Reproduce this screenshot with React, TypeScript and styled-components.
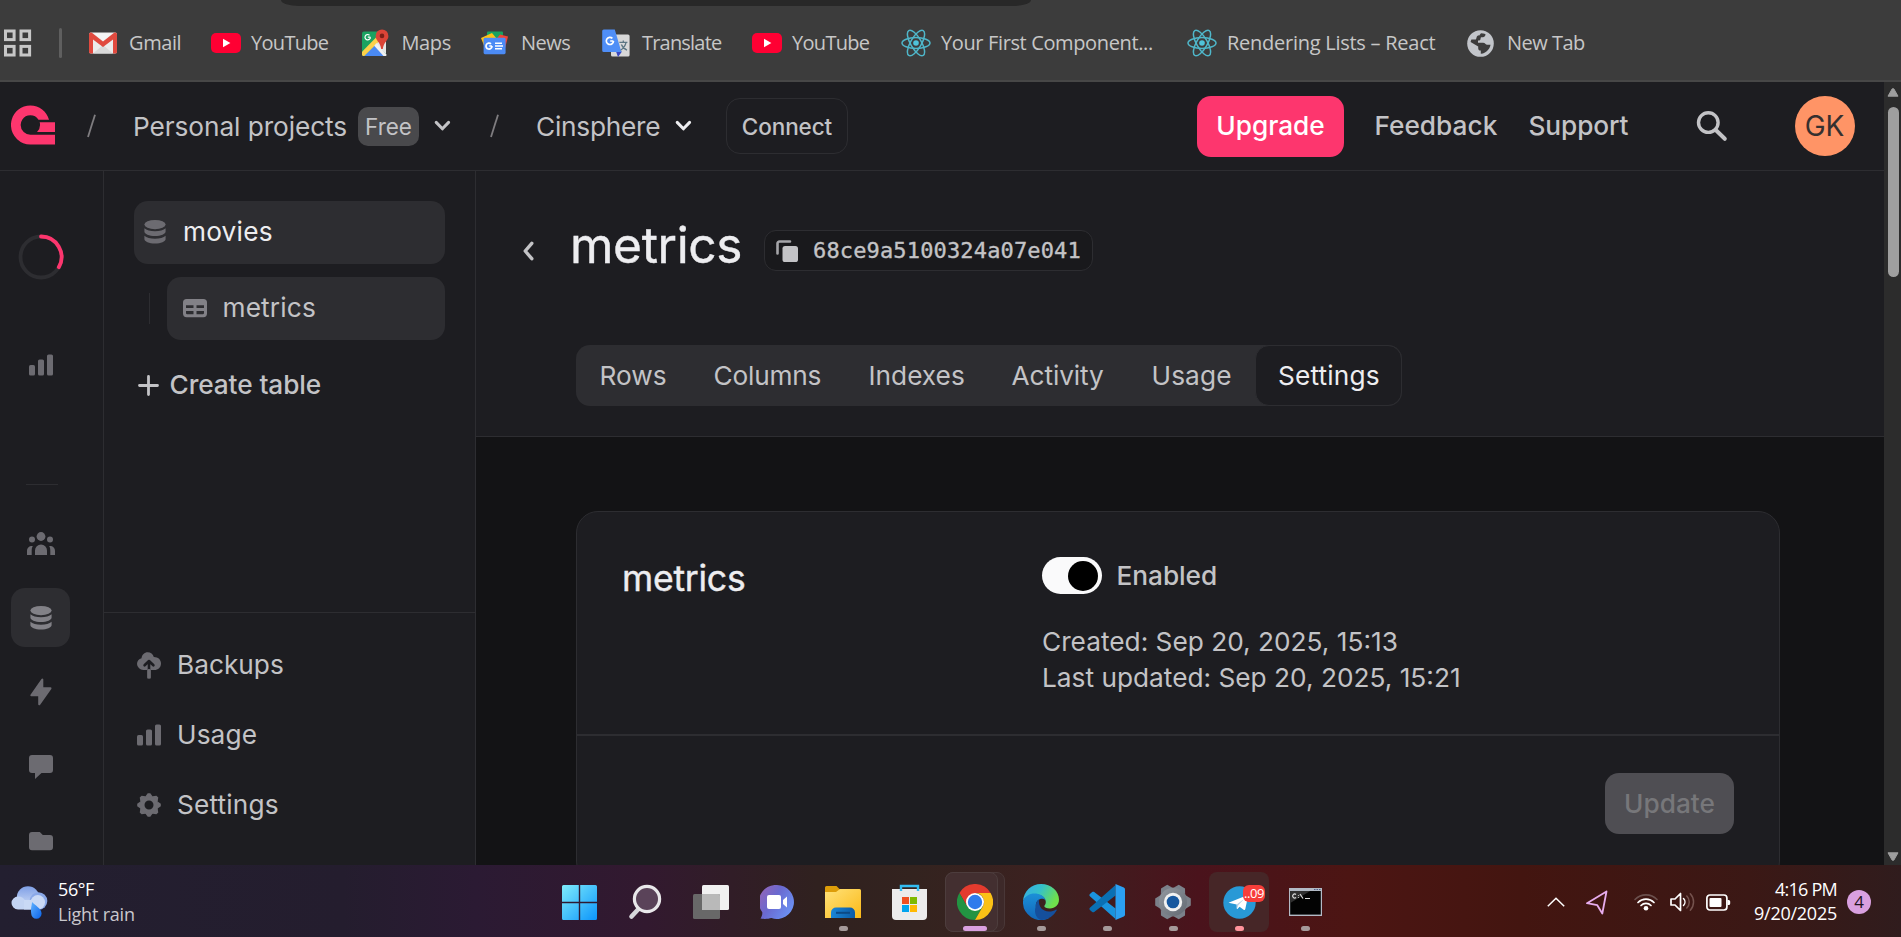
import React from 'react';
import styled, { createGlobalStyle, css } from 'styled-components';
import { SiAppwrite } from 'react-icons/si';

const ui = '"Open Sans", "Noto Sans", sans-serif';
const inter = 'Inter, "Liberation Sans", sans-serif';
const line = '#2d2d31';
const panel = '#1d1d21';

const Global = createGlobalStyle`
  * { box-sizing: border-box; }
  html, body { margin: 0; background: #131315; overflow: hidden; }
  svg { display: block; flex: none; }
`;

const Screen = styled.div`
  width: 1901px;
  height: 937px;
  display: flex;
  flex-direction: column;
  overflow: hidden;
  font-family: ${inter};
`;

/* ---------- browser chrome ---------- */
const BrowserBar = styled.div`
  height: 82px;
  flex: none;
  background: #3c3c3c;
  border-bottom: 2px solid #474747;
`;
const AddressEdge = styled.div`
  width: 750px;
  height: 6px;
  margin-left: 281px;
  background: #282828;
  border-radius: 0 0 18px 18px / 0 0 6px 6px;
`;
const Bookmarks = styled.div`
  height: 74px;
  display: flex;
  align-items: center;
  padding-left: 4px;
`;
const BookmarkDivider = styled.div`
  width: 3px;
  height: 30px;
  border-radius: 2px;
  background: #5f5f5f;
  margin: 0 27px 0 27px;
`;
const Bookmark = styled.div<{ $w: number }>`
  width: ${(p) => p.$w}px;
  display: flex;
  align-items: center;
  white-space: nowrap;
`;
const BookmarkIcon = styled.div`
  width: 40px;
  flex: none;
`;
const BookmarkText = styled.span<{ $ls: number }>`
  font: 400 20px/26px ${ui};
  color: #c7c7c7;
  letter-spacing: ${(p) => p.$ls}px;
`;

/* ---------- page shell ---------- */
const Page = styled.div`
  height: 783px;
  flex: none;
  display: flex;
  overflow: hidden;
  background: #131315;
`;
const Site = styled.div`
  width: 1884px;
  display: flex;
  flex-direction: column;
`;
const Scrollbar = styled.div`
  width: 17px;
  background: #2c2c2c;
  display: flex;
  flex-direction: column;
  align-items: center;
  padding: 6px 0 4px 0;
`;
const Thumb = styled.div`
  width: 11px;
  height: 170px;
  border-radius: 6px;
  background: #9f9f9f;
  margin: 10px 0 auto 1px;
`;
const Header = styled.header`
  height: 89px;
  flex: none;
  background: ${panel};
  border-bottom: 1px solid ${line};
  display: flex;
  align-items: center;
  padding-left: 11px;
  color: #c3c3c6;
`;
const Logo = styled.span`
  padding-bottom: 2px;
`;
const Label = styled.span<{ $w: number; $ml?: number; $size?: number; $weight?: number; $ls?: number; $color?: string; $drop?: number }>`
  width: ${(p) => p.$w}px;
  margin-left: ${(p) => p.$ml ?? 0}px;
  padding-top: ${(p) => p.$drop ?? 0}px;
  flex: none;
  white-space: nowrap;
  font-size: ${(p) => p.$size ?? 26.25}px;
  font-weight: ${(p) => p.$weight ?? 400};
  letter-spacing: ${(p) => p.$ls ?? 0}px;
  color: ${(p) => p.$color ?? '#c3c3c6'};
  line-height: 36px;
`;
const Badge = styled.span`
  width: 61px;
  height: 39px;
  margin: 0 15px 0 11px;
  display: flex;
  align-items: center;
  justify-content: center;
  border-radius: 10px;
  background: #49494c;
  font-size: 22.5px;
`;
const Spot = styled.span<{ $ml: number }>`
  margin-left: ${(p) => p.$ml}px;
`;
const Button = styled.button<{ $kind: 'outline' | 'pink' | 'disabled'; $w: number }>`
  width: ${(p) => p.$w}px;
  height: 61px;
  padding: 0;
  border: 0;
  border-radius: 14px;
  flex: none;
  font: 500 26.25px/36px ${inter};
  ${(p) => p.$kind === 'pink' && css`background: #fd366e; color: #fff;`}
  ${(p) => p.$kind === 'disabled' && css`background: #4f4e53; color: #77777a;`}
  ${(p) => p.$kind === 'outline' && css`
    height: 56px;
    padding-top: 2px;
    background: transparent;
    border: 1px solid ${line};
    color: #c3c3c6;
    font-size: 22.5px;
    letter-spacing: -0.1px;
  `}
`;
const Avatar = styled.div`
  width: 60px;
  height: 60px;
  margin-left: 67px;
  border-radius: 50%;
  background: #ff9466;
  color: #36302f;
  font-size: 28px;
  display: flex;
  align-items: center;
  justify-content: center;
`;
const Body = styled.div`
  flex: 1;
  display: flex;
  min-height: 0;
`;

/* ---------- left rail ---------- */
const Rail = styled.nav`
  width: 104px;
  flex: none;
  background: ${panel};
  border-right: 1px solid ${line};
  padding: 56px 0 0 11px;
  display: flex;
  flex-direction: column;
  overflow: hidden;
`;
const RailTile = styled.div<{ $mt?: number; $active?: boolean }>`
  width: 59px;
  height: 59px;
  flex: none;
  margin-top: ${(p) => p.$mt ?? 15.4}px;
  border-radius: 14px;
  background: ${(p) => (p.$active ? line : 'transparent')};
  color: ${(p) => (p.$active ? '#828187' : '#6c6b71')};
  display: flex;
  align-items: center;
  justify-content: center;
`;
const RailDivider = styled.div`
  width: 32px;
  height: 1px;
  flex: none;
  margin: 90px 0 0 15px;
  background: ${line};
`;

/* ---------- database side panel ---------- */
const Side = styled.aside`
  width: 372px;
  flex: none;
  background: ${panel};
  border-right: 1px solid ${line};
  display: flex;
  flex-direction: column;
`;
const SideTop = styled.div`
  height: 441px;
  padding: 30px 30px 0;
`;
const SideBottom = styled.div`
  flex: 1;
  border-top: 1px solid ${line};
  padding: 17px 0 0 33px;
`;
const TreeRow = styled.div`
  display: flex;
  align-items: center;
  justify-content: space-between;
  margin-top: 13px;
`;
const TreeLine = styled.div`
  width: 1px;
  height: 31px;
  margin-left: 15px;
  background: ${line};
`;
const TreeItem = styled.div<{ $w: number; $pad: number; $gap: number; $icon: string }>`
  width: ${(p) => p.$w}px;
  height: 63px;
  padding: 0 0 1px ${(p) => p.$pad}px;
  border-radius: 14px;
  background: ${line};
  display: flex;
  align-items: center;
  gap: ${(p) => p.$gap}px;
  color: ${(p) => p.$icon};
`;
const CreateTable = styled.div`
  display: flex;
  align-items: center;
  gap: 10.5px;
  padding: 27px 0 0 4px;
  color: #c3c3c6;
`;
const SideLink = styled.div`
  height: 70px;
  display: flex;
  align-items: center;
  gap: 16px;
  color: #6c6b71;
`;

/* ---------- main content ---------- */
const Main = styled.main`
  flex: 1;
  min-width: 0;
`;
const Cover = styled.div`
  height: 266px;
  background: ${panel};
  border-bottom: 1px solid ${line};
  padding-top: 50px;
`;
const TitleRow = styled.div`
  height: 59px;
  display: flex;
  align-items: center;
  padding-left: 46px;
  color: #c3c3c6;
`;
const Title = styled.h1`
  width: 194px;
  margin: 0 0 11px 35px;
  font-size: 49.6px;
  line-height: 60px;
  font-weight: 400;
  letter-spacing: -0.35px;
  color: #ededf0;
  -webkit-text-stroke: 0.4px #ededf0;
`;
const IdPill = styled.div`
  width: 329px;
  height: 41px;
  border: 1px solid ${line};
  border-radius: 12px;
  background: #19191c;
  display: flex;
  align-items: center;
  padding-left: 11px;
  gap: 15px;
  font: 400 22px/30px "DejaVu Sans Mono", monospace;
  letter-spacing: 0.15px;
  -webkit-text-stroke: 0.35px #c3c3c6;
`;
const Tabs = styled.div`
  width: 826px;
  height: 61px;
  margin: 65px 0 0 100px;
  border-radius: 14px;
  background: ${line};
  display: flex;
  align-items: center;
`;
const ActiveTab = styled.div`
  width: 147px;
  height: 61px;
  margin-left: auto;
  border: 1px solid ${line};
  border-radius: 14px;
  background: ${panel};
  display: flex;
  align-items: center;
  padding-left: 22px;
`;
const Card = styled.section`
  width: 1204px;
  height: 372px;
  margin: 74px 0 0 100px;
  border: 1px solid ${line};
  border-radius: 22px;
  background: ${panel};
`;
const CardTop = styled.div`
  height: 224px;
  display: flex;
  padding: 45px 0 0 44px;
  border-bottom: 2px solid ${line};
`;
const CardTitle = styled.h2`
  width: 421px;
  margin: 0;
  padding: 2px 0 0 1px;
  font-size: 35.6px;
  line-height: 40px;
  font-weight: 400;
  letter-spacing: -0.25px;
  color: #ededf0;
  -webkit-text-stroke: 0.4px #ededf0;
`;
const CardFoot = styled.div`
  display: flex;
  justify-content: flex-end;
  padding: 37px 45px 0 0;
`;
const ToggleRow = styled.div`
  display: flex;
  align-items: center;
  height: 37px;
`;
const Toggle = styled.div`
  width: 60px;
  height: 37px;
  border-radius: 19px;
  background: #fafafb;
  display: flex;
  align-items: center;
  justify-content: flex-end;
  padding-right: 4px;
`;
const Knob = styled.div`
  width: 30px;
  height: 30px;
  border-radius: 50%;
  background: #000;
`;
const Dates = styled.p`
  margin: 30px 0 0 0;
  font-size: 26.25px;
  line-height: 36px;
  color: #c3c3c6;
`;

/* ---------- taskbar ---------- */
const Taskbar = styled.footer`
  height: 72px;
  flex: none;
  display: flex;
  align-items: center;
  padding: 2px 0 0 11px;
  background: linear-gradient(90deg, #231f30 0%, #241d2e 18%, #2b1a33 25%, #32192f 34%, #30211f 43%, #33231f 48%, #3c2120 55%, #4a131c 63%, #4c1513 71%, #431510 80%, #3b1815 92%, #301c1d 100%);
`;
const Weather = styled.div`
  width: 535px;
  display: flex;
  align-items: center;
  gap: 10px;
`;
const WeatherText = styled.div<{ $dim?: boolean }>`
  font: 400 18px/25px ${ui};
  letter-spacing: ${(p) => (p.$dim ? -0.2 : -0.4)}px;
  color: ${(p) => (p.$dim ? '#c9c7cd' : '#fff')};
`;
const TaskSlot = styled.div`
  width: 66px;
  height: 60px;
  display: flex;
  justify-content: center;
  position: relative;
`;
const TaskTile = styled.div<{ $bg?: string; $bar?: string; $barW?: number }>`
  width: 60px;
  height: 60px;
  border-radius: 8px;
  display: flex;
  align-items: center;
  justify-content: center;
  position: relative;
  background: ${(p) => p.$bg ?? 'transparent'};
  &::after {
    content: '';
    position: absolute;
    bottom: 1px;
    width: ${(p) => p.$barW ?? 9}px;
    height: 5px;
    border-radius: 3px;
    background: ${(p) => p.$bar ?? 'transparent'};
  }
`;
/* two overlapping cards behind the icon of an app that has several windows */
const StackCard = styled.div<{ $front?: boolean }>`
  position: absolute;
  left: 3px;
  top: 0;
  width: ${(p) => (p.$front ? 53 : 60)}px;
  height: 60px;
  border: 1px solid ${(p) => (p.$front ? '#4d3d3d' : '#493737')};
  border-radius: 8px;
  background: ${(p) => (p.$front ? '#432f30' : '#3d2929')};
`;
const Count = styled.div`
  position: absolute;
  left: 34px;
  top: 13px;
  width: 22px;
  height: 17px;
  border-radius: 6px;
  background: #f73e3a;
  color: #fff;
  font: 400 13px/16px ${ui};
  letter-spacing: -0.4px;
  text-align: center;
`;
const Tray = styled.div`
  display: flex;
  align-items: center;
  margin-left: 209px;
`;
const Clock = styled.div`
  width: 106px;
  text-align: right;
  font: 400 18px/23.5px ${ui};
  letter-spacing: -0.25px;
  color: #fff;
  padding-bottom: 1px;
`;
const Time = styled.div`
  letter-spacing: -0.75px;
`;
const Notice = styled.div`
  width: 24px;
  height: 24px;
  border-radius: 50%;
  margin-left: 10px;
  background: #d9a0e0;
  color: #1f1420;
  font: 400 17px/24px ${ui};
  text-align: center;
`;

/* ---------- icons ---------- */
const YouTubeIcon = () => (
  <svg width="30" height="20" viewBox="0 0 30 20"><rect width="30" height="20" rx="5" fill="#ff0033" /><path d="M12 5.8v8.4l7.4-4.2z" fill="#fff" /></svg>
);
const GmailIcon = () => (
  <svg width="28" height="22" viewBox="0 0 28 22">
    <rect x="0" y="0.5" width="28" height="21" rx="2" fill="#ececec" />
    <path d="M4 21.5L14 13l10 8.5z" fill="#d9d9d9" />
    <path d="M0 2.4V20a1.6 1.6 0 0 0 1.6 1.6H4V7.6L14 15l10-7.4v14h2.4A1.6 1.6 0 0 0 28 20V2.4C28 .8 26 .1 24.8 1L14 9.6 3.2 1C2 .1 0 .8 0 2.4z" fill="#e04a3f" />
    <path d="M4.5 1.2h19L14 8.8z" fill="#f5f5f5" />
  </svg>
);
const MapsIcon = () => (
  <svg width="27" height="28" viewBox="0 0 27 28">
    <rect y="2.5" width="24" height="24.5" rx="2" fill="#1ba261" />
    <path d="M2 27L13 15.5 24 27z" fill="#4a8af4" />
    <path d="M15 13.5l9-8V25l-10-9.5z" fill="#e6e6e6" />
    <path d="M0 22.8L14.5 8l3.4 3.4L2.3 27H1.6A1.6 1.6 0 0 1 0 25.4z" fill="#fcd14b" />
    <path d="M14.4 14l10.4 12-1 1h-2.3L12.2 16.8z" fill="#f0f0f0" />
    <path d="M20 0.5a6.4 6.4 0 0 0-6.4 6.4c0 5 4.8 5.6 5.6 13.2h1.6c.8-7.6 5.6-8.2 5.6-13.2A6.4 6.4 0 0 0 20 .5z" fill="#db4437" />
    <circle cx="20" cy="6.9" r="2.3" fill="#7c1f17" />
    <path d="M8.4 8.2H5.8M8.4 8.2a2.7 2.7 0 1 1-.9-2" fill="none" stroke="#fff" strokeWidth="1.2" />
  </svg>
);
const NewsIcon = () => (
  <svg width="28" height="24" viewBox="0 0 28 24">
    <rect x="6" y="0.5" width="16" height="10" rx="1" fill="#16a260" />
    <path d="M0 7l11-5 5 6-12 9z" fill="#ffc017" />
    <path d="M27 5.5l-8-2-4 5 9 9z" fill="#f44336" />
    <rect x="2.6" y="6.8" width="22" height="16.4" rx="1.4" fill="#4c8bf5" />
    <path d="M10.9 15H8.3M11 15a3 3 0 1 1-1-2.2" fill="none" stroke="#fff" strokeWidth="1.7" />
    <path d="M14 12.2h7M14 15h8M14 17.8h7" stroke="#fff" strokeWidth="1.6" />
  </svg>
);
const TranslateIcon = () => (
  <svg width="28" height="28" viewBox="0 0 28 28">
    <rect x="9" y="5.5" width="18.6" height="22" rx="1.6" fill="#d8d8d8" />
    <path d="M14 22.5h6L16 28z" fill="#3a47c0" />
    <path d="M1.8.5h11L19.4 23H1.8A1.6 1.6 0 0 1 .2 21.4V2.1A1.6 1.6 0 0 1 1.8.5z" fill="#4f8ef7" />
    <path d="M11.4 12H8.2M11.5 12a3.6 3.6 0 1 1-1.1-2.7" fill="none" stroke="#fff" strokeWidth="1.7" />
    <path d="M17.4 13.4h8M21.3 11.5v1.9M24 13.4c-.6 3.3-3 6.3-5.4 7.8M19.4 15.6c1 2.4 3 4.6 5.6 5.6" fill="none" stroke="#5d7683" strokeWidth="1.3" />
  </svg>
);
const ReactIcon = () => (
  <svg width="30" height="28" viewBox="-15 -14 30 28" fill="none" stroke="#4fb7ca" strokeWidth="1.5">
    <ellipse rx="14" ry="5.4" /><ellipse rx="14.4" ry="5.4" transform="rotate(60)" /><ellipse rx="14.4" ry="5.4" transform="rotate(120)" />
    <circle r="2.8" fill="#4fc3da" stroke="none" />
  </svg>
);
const GlobeIcon = () => (
  <svg width="27" height="27" viewBox="0 0 27 27">
    <circle cx="13.5" cy="13.5" r="13.3" fill="#c2c5ca" />
    <path d="M14 3.2c3.2 0 4.6 1.2 4.6 1.2-.6 2.4-1.8 2.8-4 2.8-.6 0-1 .3-1 1.2 0 1.6-1 2.2-2.6 2.2v2.2h5c2.2 0 2.6 2 4.2 2h3.3c0-.5.1-1 0-1.6.6 3.6-3.4 10.4-9.7 10.6v-3.2c-2 0-2.6-1-2.6-2.6v-1.4L3.6 12c.2-1 .4-2 .8-2.6h4.4c1-1 .4-2.8 1.8-3.7 1-.6 1.8-.2 2.2-1z" fill="#3c3c3c" />
  </svg>
);
const AppsIcon = () => (
  <svg width="28" height="28" viewBox="0 0 28 28" fill="none" stroke="#c7c7c7" strokeWidth="3">
    <rect x="1.5" y="2" width="8.6" height="8.6" /><rect x="17" y="2" width="8.6" height="8.6" /><rect x="1.5" y="17.4" width="8.6" height="8.6" /><rect x="17" y="17.4" width="8.6" height="8.6" />
  </svg>
);
const Slash = () => (
  <svg width="9" height="24" viewBox="0 0 9 24"><path d="M8 .8L1 23" stroke="#7f7d80" strokeWidth="1.8" /></svg>
);
const ChevronDown = ({ color }: { color: string }) => (
  <svg width="17" height="12" viewBox="0 0 17 12"><path d="M2.2 2.4l6.2 6.4 6.2-6.4" fill="none" stroke={color} strokeWidth="3" strokeLinecap="round" strokeLinejoin="round" /></svg>
);
const ChevronLeft = () => (
  <svg width="13" height="20" viewBox="0 0 13 20"><path d="M9.8 2.3L3.2 10l6.6 7.7" fill="none" stroke="#c3c3c6" strokeWidth="3.4" strokeLinecap="round" strokeLinejoin="round" /></svg>
);
const SearchIcon = () => (
  <svg width="32" height="32" viewBox="0 0 32 32" fill="none" stroke="#c3c3c6" strokeLinecap="round"><circle cx="12.3" cy="12.6" r="9.8" strokeWidth="3.4" /><path d="M19.5 19.8l9.3 9" strokeWidth="4" /></svg>
);
const DatabaseIcon = () => (
  <svg width="22" height="24" viewBox="0 0 22 24" fill="currentColor">
    <ellipse cx="11" cy="4.6" rx="10.6" ry="4.6" />
    <path d="M.4 8.2c2 2 6 3 10.6 3s8.600-1 10.600-3v3.300c0 2.500-4.700 4.600-10.600 4.600S.4 14 .4 11.500z" />
    <path d="M.4 15.700c2 2 6 3 10.600 3s8.600-1 10.600-3V19c0 2.500-4.700 4.600-10.600 4.600S.4 21.500.4 19z" />
  </svg>
);
const TableIcon = () => (
  <svg width="24" height="19" viewBox="0 0 24 19" fill="currentColor"><path fillRule="evenodd" d="M3.600 0h16.800A3.600 3.600 0 0 1 24 3.600v11A3.600 3.600 0 0 1 20.400 18.200H3.600A3.600 3.600 0 0 1 0 14.600v-11A3.600 3.600 0 0 1 3.600 0zM3 6.300v2.800h7.500V6.300zm10.500 0v2.800H21V6.300zM3 12v2.100c0 .7.400 1.100 1 1.100h6.500V12zm10.500 0v3.200H20c.6 0 1-.4 1-1.100V12z" /></svg>
);
const BarsIcon = () => (
  <svg width="24" height="22" viewBox="0 0 24 22" fill="currentColor"><rect y="11" width="6" height="10.500" rx="1.600" /><rect x="9" y="5.500" width="6" height="16" rx="1.600" /><rect x="18" y=".5" width="6" height="21" rx="1.600" /></svg>
);
const PeopleIcon = () => (
  <svg width="28" height="23" viewBox="0 0 28 23" fill="currentColor">
    <circle cx="14" cy="4.500" r="4.400" /><circle cx="5" cy="7.600" r="3" /><circle cx="23" cy="7.600" r="3" />
    <path d="M8 23v-4.500a6 6 0 0 1 12 0V23zM0 23v-4c0-3.200 2-5.300 5.800-5.100-.9 1.500-1.100 3-1.100 5.100v4zM28 23v-4c0-3.200-2-5.300-5.800-5.100.9 1.500 1.100 3 1.100 5.100v4z" />
  </svg>
);
const BoltIcon = () => (
  <svg width="22" height="28" viewBox="0 0 22 28" fill="currentColor" stroke="currentColor" strokeWidth="2" strokeLinejoin="round"><path d="M12.300 1.500v8.800h8.200L9.200 26.300v-9H1.300z" /></svg>
);
const ChatIcon = () => (
  <svg width="24" height="24" viewBox="0 0 24 24" fill="currentColor"><path d="M3 0h18a3 3 0 0 1 3 3v12a3 3 0 0 1-3 3h-8.500L6 24v-6H3a3 3 0 0 1-3-3V3a3 3 0 0 1 3-3z" /></svg>
);
const FolderIcon = () => (
  <svg width="24" height="19" viewBox="0 0 24 19" fill="currentColor"><path d="M3 0h7.800l3 3H21a3 3 0 0 1 3 3v9.300a3 3 0 0 1-3 3H3a3 3 0 0 1-3-3V3a3 3 0 0 1 3-3z" /></svg>
);
const CloudUpIcon = () => (
  <svg width="24" height="27" viewBox="0 0 24 27" fill="currentColor">
    <path d="M6.600 18A6.300 6.300 0 0 1 0 12c0-2.800 1.900-5 4.500-5.700C4.900 2.700 7.500.3 10.700.3c2.900 0 5.400 1.800 6.100 4.700 4.200-.1 7.200 2.800 7.200 6.400 0 3.800-3 6.600-6.600 6.600h-3.700v8.500h-3.400V18z" />
    <path d="M12 18V9.500M7.600 13.300L12 9l4.400 4.300" fill="none" stroke={panel} strokeWidth="2.600" strokeLinecap="round" strokeLinejoin="round" />
    <rect x="10.400" y="17" width="3.200" height="9.500" rx="1.400" />
  </svg>
);
const CogIcon = () => (
  <svg width="24" height="24" viewBox="-12 -12 24 24" fill="none" stroke="currentColor">
    <circle r="7" strokeWidth="5" />
    {[0, 45, 90, 135, 180, 225, 270, 315].map((a) => (
      <path key={a} d="M-3.600 -8.600L-1.300 -11.800H1.300L3.600 -8.600z" fill="currentColor" stroke="none" transform={`rotate(${a})`} />
    ))}
  </svg>
);
const PlusIcon = () => (
  <svg width="21" height="21" viewBox="0 0 21 21"><path d="M10.500 1.500v18M1.500 10.500h18" stroke="#c3c3c6" strokeWidth="2.800" strokeLinecap="round" /></svg>
);
const CopyIcon = () => (
  <svg width="22" height="22" viewBox="0 0 22 22"><path d="M1.500 13.500V3.500a2 2 0 0 1 2-2H14" fill="none" stroke="#a5a5a9" strokeWidth="2.600" strokeLinecap="round" /><rect x="6.500" y="6" width="15.500" height="16" rx="2.600" fill="#c3c3c6" /></svg>
);
const Ring = () => (
  <svg width="46" height="46" viewBox="-23 -23 46 46" fill="none" strokeWidth="3.800"><circle r="20.500" stroke={line} /><path d="M0 -20.500A20.500 20.500 0 0 1 17.800 10.200" stroke="#fd366e" strokeLinecap="round" /></svg>
);
const Arrow = ({ down }: { down?: boolean }) => (
  <svg width="12" height="9" viewBox="0 0 12 9"><path d={down ? 'M1 .8h10L6.800 8.200H5.200z' : 'M1 8.200h10L6.800.8H5.200z'} fill="#9f9f9f" stroke="#9f9f9f" strokeLinejoin="round" /></svg>
);

const CloudIcon = () => (
  <svg width="37" height="33" viewBox="0 0 37 33">
    <defs>
      <linearGradient id="cl" x1="0" y1="0" x2="0" y2="1"><stop offset="0" stopColor="#7f9fe6" /><stop offset="1" stopColor="#d5e2f8" /></linearGradient>
      <linearGradient id="dr" x1="0" y1="0" x2="1" y2="1"><stop offset="0" stopColor="#5fb1ff" /><stop offset="1" stopColor="#0a63ea" /></linearGradient>
    </defs>
    <circle cx="17" cy="11.500" r="11.200" fill="url(#cl)" />
    <circle cx="27.500" cy="15" r="8.800" fill="#8aa8e8" />
    <circle cx="26.800" cy="16.300" r="7.200" fill="#cbdaf6" />
    <path d="M7 10.500c4 0 6 2 7.500 4.500L20 23.500H7a6.500 6.500 0 0 1 0-13z" fill="#c3d4f3" />
    <path d="M13 14h15v9.500H13z" fill="#c9d9f5" />
    <path d="M21 16c0 3-1.500 6-.8 11.500a5.200 5.200 0 0 0 10.400 0C30.600 22.500 24 19.500 21 16z" fill="url(#dr)" />
  </svg>
);
const WindowsIcon = () => (
  <svg width="35" height="35" viewBox="0 0 35 35">
    <defs><linearGradient id="wn" gradientUnits="userSpaceOnUse" x1="0" y1="0" x2="35" y2="35"><stop offset="0" stopColor="#7fecfb" /><stop offset=".5" stopColor="#46c1fb" /><stop offset="1" stopColor="#0c95fb" /></linearGradient></defs>
    <path d="M1.500 0H16.800V16.800H0V1.500A1.500 1.500 0 0 1 1.500 0zM18.200 0h15.300A1.500 1.500 0 0 1 35 1.500v15.300H18.200zM0 18.200h16.800V35H1.500A1.500 1.500 0 0 1 0 33.500zM18.200 18.200H35v15.300a1.500 1.500 0 0 1-1.500 1.500H18.200z" fill="url(#wn)" />
  </svg>
);
const TaskSearchIcon = () => (
  <svg width="34" height="36" viewBox="0 0 34 36" fill="none"><path d="M10.500 25L3.500 32.500" stroke="#d6d6da" strokeWidth="4.600" strokeLinecap="round" /><circle cx="19" cy="15" r="12.600" fill="#5a4359" stroke="#e9e8ea" strokeWidth="3.200" /></svg>
);
const TaskViewIcon = () => (
  <svg width="36" height="34" viewBox="0 0 36 34"><rect x="9" width="27" height="25" rx="1.500" fill="#f1f1f1" /><rect y="9" width="27" height="25" rx="1.500" fill="#686868" /><path d="M9 9h16.500a1.500 1.500 0 0 1 1.500 1.500V25H9z" fill="#b9b9b9" /></svg>
);
const MeetIcon = () => (
  <svg width="34" height="34" viewBox="0 0 34 34">
    <defs><linearGradient id="mt" x1="0" y1="0" x2="1" y2=".6"><stop offset="0" stopColor="#9a63b4" /><stop offset=".5" stopColor="#6a69cf" /><stop offset="1" stopColor="#6b8ff2" /></linearGradient></defs>
    <path d="M17 0a17 17 0 1 1-5.500 33.100C8.500 34 4 34.300.500 33.600c1.300-2 2-4 1.800-6.300A17 17 0 0 1 17 0z" fill="url(#mt)" />
    <rect x="7" y="10" width="14" height="14" rx="2" fill="#fff" /><path d="M23 15l4-3.500v11L23 19z" fill="#fff" />
  </svg>
);
const ExplorerIcon = () => (
  <svg width="36" height="34" viewBox="0 0 36 34">
    <defs><linearGradient id="fo" x1="0" y1="0" x2="1" y2="1"><stop offset="0" stopColor="#ffe27a" /><stop offset="1" stopColor="#fbb917" /></linearGradient><linearGradient id="fb" x1="0" y1="0" x2="1" y2="0"><stop offset="0" stopColor="#1b86d6" /><stop offset="1" stopColor="#0c5ba6" /></linearGradient></defs>
    <path d="M1.500 1h10l4 4v6H0V2.500A1.500 1.500 0 0 1 1.500 1z" fill="#dd9d09" />
    <path d="M0 7h11l4-3h19.500A1.500 1.500 0 0 1 36 5.500V33H0z" fill="url(#fo)" />
    <path d="M6 33v-5.500a5 5 0 0 1 5-5h14a5 5 0 0 1 5 5V33z" fill="url(#fb)" /><path d="M11 27.800h14" stroke="#0c4a86" strokeWidth="2" />
  </svg>
);
const StoreIcon = () => (
  <svg width="35" height="36" viewBox="0 0 35 36">
    <path d="M0 5h35v27a4 4 0 0 1-4 4H4a4 4 0 0 1-4-4z" fill="#ececec" />
    <path d="M9 7V2h17v5" fill="none" stroke="#33bdf2" strokeWidth="2.400" />
    <path d="M10 13h7v7h-7z" fill="#f05023" /><path d="M18 13h7v7h-7z" fill="#7fb900" /><path d="M10 21h7v7h-7z" fill="#02a4ef" /><path d="M18 21h7v7h-7z" fill="#ffb902" />
  </svg>
);
const ChromeIcon = () => (
  <svg width="36" height="36" viewBox="-18 -18 36 36">
    <path d="M0 -9H15.600A18 18 0 0 0 -15.600 -9L-7.800 4.500 0 0z" fill="#e33b2e" />
    <path d="M-15.600 -9A18 18 0 0 0 0 18L7.800 4.500 0 0-7.800 4.500z" fill="#229342" />
    <path d="M15.600 -9A18 18 0 0 1 0 18L7.800 4.500A9 9 0 0 0 0 -9z" fill="#fbc116" />
    <circle r="9" fill="#fff" /><circle r="7.200" fill="#2f7bec" />
  </svg>
);
const EdgeIcon = () => (
  <svg width="36" height="36" viewBox="0 0 36 36">
    <defs>
      <linearGradient id="e1" x1="0" y1="0" x2="1" y2=".4"><stop offset="0" stopColor="#35a8e8" /><stop offset=".5" stopColor="#35c1c9" /><stop offset="1" stopColor="#6fe04c" /></linearGradient>
      <linearGradient id="e2" x1="0" y1="0" x2="0" y2="1"><stop offset="0" stopColor="#1b8fd8" /><stop offset="1" stopColor="#1266b8" /></linearGradient>
    </defs>
    <path d="M0 17C.7 7 8.500 0 18 0c10.500 0 18 7.500 18 15.500 0 5.500-4 9-9 9-3.500 0-5.700-1.300-5.700-2.300 0-.9 1.500-1.500 1.500-4.200 0-4-4-7.500-10-7.500C6 10.500 2 13.500 0 17z" fill="url(#e1)" />
    <path d="M0 17c2-5 6.500-7.500 11.500-7.500 5 0 10 2.500 11.300 7-2.500-3.500-10-2-10 5.500 0 6 6 11 13.500 12A18 18 0 0 1 0 17z" fill="url(#e2)" />
    <path d="M12.800 22c0-3 1.200-5.300 3.200-6.500-1 7 3.500 12 10 12 3 0 5-.8 6.700-1.800.7-.4 1.300.2.9.9A18 18 0 0 1 19 36c-4 0-9-6-6.200-14z" fill="#154f9c" />
  </svg>
);
const CodeIcon = () => (
  <svg width="36" height="36" viewBox="0 0 36 36">
    <path d="M1.200 9.800l2-1.700c.6-.5 1.400-.4 2 0L26.500 24.500V35L.9 12.300c-.7-.7-.6-1.800.3-2.500z" fill="#1a93de" />
    <path d="M1.200 26.200l2 1.700c.6.500 1.400.4 2 0L26.500 11.500V1L.9 23.700c-.7.7-.6 1.800.3 2.500z" fill="#0a70b4" />
    <path d="M26.500 0l8.300 3.400c.8.400 1.200 1 1.200 1.800v25.600c0 .8-.4 1.400-1.200 1.800L26.500 36z" fill="#2ba0f2" />
  </svg>
);
const WinSettingsIcon = () => (
  <svg width="36" height="36" viewBox="-18 -18 36 36">
    <defs><linearGradient id="gs" x1="0" y1="0" x2="1" y2="1"><stop offset="0" stopColor="#93989f" /><stop offset="1" stopColor="#636a73" /></linearGradient></defs>
    <circle r="14.500" fill="#7b818a" />
    {[30, 90, 150, 210, 270, 330].map((a) => <path key={a} d="M-6.500 -13L-3.600 -17.800H3.600L6.500 -13z" fill="#7b818a" transform={`rotate(${a})`} />)}
    <circle r="14" fill="url(#gs)" /><circle r="9.200" fill="#f1f1f1" /><circle r="6.300" fill="#17589f" />
  </svg>
);
const TelegramIcon = () => (
  <svg width="33" height="33" viewBox="0 0 33 33"><circle cx="16.500" cy="16.500" r="16.200" fill="#2899d6" /><path d="M5.500 16.800L23.500 9.500c1-.4 1.600.2 1.400 1.300L22.300 23c-.2 1-.9 1.200-1.700.7l-4-3-2 2c-.4.400-.9.300-.9-.4v-3.800z" fill="#fff" /><path d="M13.700 18.500l7.600-5.800-6 6.500-.9 3.300z" fill="#b8d3e5" /></svg>
);
const TerminalIcon = () => (
  <svg width="33" height="28" viewBox="0 0 33 28">
    <rect width="33" height="28" fill="#b3bac5" /><rect x="1.200" y="3" width="30.600" height="23.600" fill="#030303" /><path d="M1.200 3h20L1.200 15z" fill="#303030" />
    <path d="M25 1.500h1.500M27.500 1.500h1.500M30 1.500h1.500" stroke="#4d5e8a" />
    <path d="M7 6.500a2 2 0 1 0 0 3M9.500 7v.8M9.500 9v.8M11 6l3 4.500M16 10.500h5" fill="none" stroke="#ddd" strokeWidth="1.200" />
  </svg>
);

const TrayIcons = () => (
  <>
    <svg width="18" height="10" viewBox="0 0 18 10"><path d="M.8 9.300L9 1.200l8.200 8.100" fill="none" stroke="#fff" strokeWidth="1.500" /></svg>
    <Spot $ml={21}><svg width="22" height="25" viewBox="0 0 22 25"><path d="M20.500 1.500L1 13.200l10.300 2 5 8.300z" fill="none" stroke="#e8adee" strokeWidth="1.800" strokeLinejoin="round" /></svg></Spot>
    <Spot $ml={26}>
      <svg width="24" height="18" viewBox="0 0 24 18" fill="none" strokeLinecap="round">
        <path d="M1 6.500a15.500 15.500 0 0 1 22 0" stroke="#6c514e" strokeWidth="1.600" /><path d="M4 9.500a11.300 11.300 0 0 1 16 0M7 12.500a7 7 0 0 1 10 0" stroke="#fff" strokeWidth="1.700" /><circle cx="12" cy="15.300" r="2.300" fill="#fff" />
      </svg>
    </Spot>
    <Spot $ml={12}>
      <svg width="25" height="20" viewBox="0 0 25 20" fill="none" strokeLinecap="round" strokeLinejoin="round">
        <path d="M1 7h4l5.500-5.500v17L5 13H1z" stroke="#fff" strokeWidth="1.700" /><path d="M13.500 6.500a5 5 0 0 1 0 7" stroke="#fff" strokeWidth="1.500" /><path d="M16.800 4a8.500 8.500 0 0 1 0 12M20.300 1.800a12 12 0 0 1 0 16.400" stroke="#75534e" strokeWidth="1.500" />
      </svg>
    </Spot>
    <Spot $ml={11}>
      <svg width="25" height="17" viewBox="0 0 25 17"><rect x=".9" y="1" width="20" height="15" rx="3" fill="none" stroke="#fff" strokeWidth="1.700" /><rect x="3.500" y="4" width="12" height="9" rx="1" fill="#fff" /><path d="M21.500 6h1.200a1.500 1.500 0 0 1 1.500 1.500v2a1.500 1.500 0 0 1-1.500 1.500h-1.200z" fill="#fff" /></svg>
    </Spot>
  </>
);

const bookmarks: { text: string; w: number; ls: number; icon: React.ReactNode }[] = [
  { text: 'Gmail', w: 122, ls: -0.4, icon: <GmailIcon /> },
  { text: 'YouTube', w: 150.5, ls: -0.7, icon: <YouTubeIcon /> },
  { text: 'Maps', w: 119.5, ls: -0.4, icon: <MapsIcon /> },
  { text: 'News', w: 121, ls: -0.5, icon: <NewsIcon /> },
  { text: 'Translate', w: 150, ls: -0.8, icon: <TranslateIcon /> },
  { text: 'YouTube', w: 149, ls: -0.7, icon: <YouTubeIcon /> },
  { text: 'Your First Component...', w: 286, ls: -0.37, icon: <ReactIcon /> },
  { text: 'Rendering Lists – React', w: 280, ls: -0.26, icon: <ReactIcon /> },
  { text: 'New Tab', w: 130, ls: -0.5, icon: <GlobeIcon /> },
];

const tabs: [string, number, number][] = [['Rows', 0, 114], ['Columns', -0.2, 155], ['Indexes', 0, 143], ['Activity', -0.1, 140], ['Usage', 0.1, 90]];

export default function App() {
  return (
    <Screen>
      <Global />
      <BrowserBar>
        <AddressEdge />
        <Bookmarks>
          <AppsIcon />
          <BookmarkDivider />
          {bookmarks.map((b, i) => (
            <Bookmark key={i} $w={b.w}>
              <BookmarkIcon>{b.icon}</BookmarkIcon>
              <BookmarkText $ls={b.ls}>{b.text}</BookmarkText>
            </Bookmark>
          ))}
        </Bookmarks>
      </BrowserBar>

      <Page>
        <Site>
          <Header>
            <Logo><SiAppwrite size={44} color="#fd366e" /></Logo>
            <Spot $ml={32}><Slash /></Spot>
            <Label $w={214} $ml={37} $ls={-0.08} $drop={2}>Personal projects</Label>
            <Badge>Free</Badge>
            <ChevronDown color="#c3c3c6" />
            <Spot $ml={39}><Slash /></Spot>
            <Label $w={126} $ml={37} $ls={-0.25} $drop={2}>Cinsphere</Label>
            <Spot $ml={13}><ChevronDown color="#ededf0" /></Spot>
            <Spot $ml={34}><Button $kind="outline" $w={122}>Connect</Button></Spot>
            <Spot $ml={349}><Button $kind="pink" $w={147}>Upgrade</Button></Spot>
            <Label $w={122} $ml={30.5} $weight={500}>Feedback</Label>
            <Label $w={102} $ml={32} $weight={500} $ls={-0.1}>Support</Label>
            <Spot $ml={65}><SearchIcon /></Spot>
            <Avatar>GK</Avatar>
          </Header>
          <Body>
            <Rail>
              <RailTile $mt={0}><Ring /></RailTile>
              <RailTile $mt={49}><BarsIcon /></RailTile>
              <RailDivider />
              <RailTile $mt={29}><PeopleIcon /></RailTile>
              <RailTile $active><DatabaseIcon /></RailTile>
              <RailTile><BoltIcon /></RailTile>
              <RailTile><ChatIcon /></RailTile>
              <RailTile><FolderIcon /></RailTile>
            </Rail>
            <Side>
              <SideTop>
                <TreeItem $w={311} $pad={10} $gap={17} $icon="#6c6b71">
                  <DatabaseIcon /><Label $w={100} $ls={0.2} $color="#ededf0">movies</Label>
                </TreeItem>
                <TreeRow>
                  <TreeLine />
                  <TreeItem $w={278} $pad={16} $gap={15.5} $icon="#828187">
                    <TableIcon /><Label $w={100} $ls={0.15}>metrics</Label>
                  </TreeItem>
                </TreeRow>
                <CreateTable><PlusIcon /><Label $w={160} $weight={500} $ls={-0.1}>Create table</Label></CreateTable>
              </SideTop>
              <SideBottom>
                <SideLink><CloudUpIcon /><Label $w={120}>Backups</Label></SideLink>
                <SideLink><BarsIcon /><Label $w={120} $ls={0.1}>Usage</Label></SideLink>
                <SideLink><CogIcon /><Label $w={120} $ls={0.15}>Settings</Label></SideLink>
              </SideBottom>
            </Side>
            <Main>
              <Cover>
                <TitleRow>
                  <ChevronLeft />
                  <Title>metrics</Title>
                  <IdPill><CopyIcon />68ce9a5100324a07e041</IdPill>
                </TitleRow>
                <Tabs>
                  {tabs.map(([t, ls, w], i) => <Label key={t} $w={w} $ml={i === 0 ? 23.5 : 0} $ls={ls}>{t}</Label>)}
                  <ActiveTab><Label $w={110} $ls={0.15} $color="#ededf0">Settings</Label></ActiveTab>
                </Tabs>
              </Cover>
              <Card>
                <CardTop>
                  <CardTitle>metrics</CardTitle>
                  <div>
                    <ToggleRow><Toggle><Knob /></Toggle><Label $w={110} $ml={14.5} $weight={500} $ls={-0.05}>Enabled</Label></ToggleRow>
                    <Dates>Created: Sep 20, 2025, 15:13<br />Last updated: Sep 20, 2025, 15:21</Dates>
                  </div>
                </CardTop>
                <CardFoot><Button $kind="disabled" $w={129}>Update</Button></CardFoot>
              </Card>
            </Main>
          </Body>
        </Site>
        <Scrollbar><Arrow /><Thumb /><Arrow down /></Scrollbar>
      </Page>

      <Taskbar>
        <Weather>
          <CloudIcon />
          <div><WeatherText>56°F</WeatherText><WeatherText $dim>Light rain</WeatherText></div>
        </Weather>
        <TaskSlot><TaskTile><WindowsIcon /></TaskTile></TaskSlot>
        <TaskSlot><TaskTile><TaskSearchIcon /></TaskTile></TaskSlot>
        <TaskSlot><TaskTile><TaskViewIcon /></TaskTile></TaskSlot>
        <TaskSlot><TaskTile><MeetIcon /></TaskTile></TaskSlot>
        <TaskSlot><TaskTile $bar="#a59a9a"><ExplorerIcon /></TaskTile></TaskSlot>
        <TaskSlot><TaskTile><StoreIcon /></TaskTile></TaskSlot>
        <TaskSlot><StackCard /><StackCard $front /><TaskTile $bar="#d9a0e0" $barW={24}><ChromeIcon /></TaskTile></TaskSlot>
        <TaskSlot><TaskTile $bar="#a59a9a"><EdgeIcon /></TaskTile></TaskSlot>
        <TaskSlot><TaskTile $bar="#a59a9a"><CodeIcon /></TaskTile></TaskSlot>
        <TaskSlot><TaskTile $bar="#a59a9a"><WinSettingsIcon /></TaskTile></TaskSlot>
        <TaskSlot><TaskTile $bg="#462627" $bar="#ff949c"><TelegramIcon /><Count>..09</Count></TaskTile></TaskSlot>
        <TaskSlot><TaskTile $bar="#a59a9a"><TerminalIcon /></TaskTile></TaskSlot>
        <Tray>
          <TrayIcons />
          <Clock><Time>4:16 PM</Time>9/20/2025</Clock>
          <Notice>4</Notice>
        </Tray>
      </Taskbar>
    </Screen>
  );
}
